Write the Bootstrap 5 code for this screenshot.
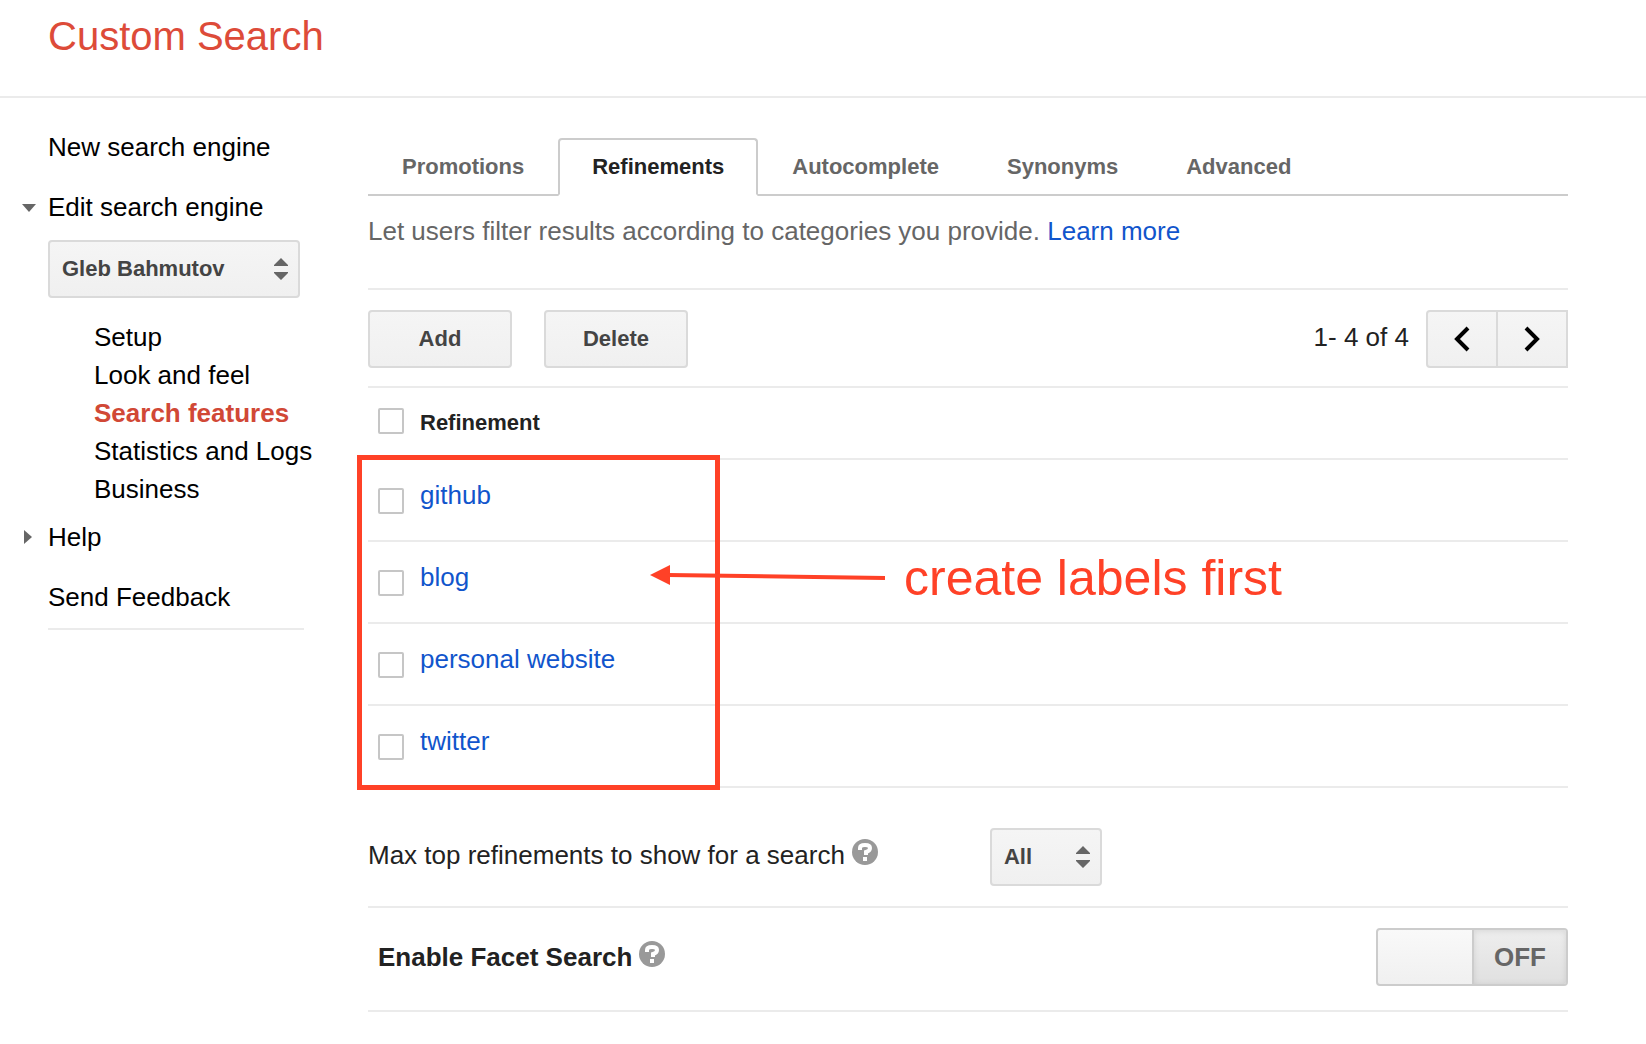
<!DOCTYPE html>
<html lang="en">
<head>
<meta charset="utf-8">
<meta name="viewport" content="width=device-width, initial-scale=1">
<title>Custom Search</title>
<link href="https://cdn.jsdelivr.net/npm/bootstrap@5.3.0/dist/css/bootstrap.min.css" rel="stylesheet">
<style>
  body { font-family: "Liberation Sans", Arial, sans-serif; font-size: 26px; line-height: 38px; color: #222; background: #fff; }
  a { color: #1155cc; text-decoration: none; }
  .top-bar { padding: 13px 48px 37px; border-bottom: 2px solid #ebebeb; }
  .brand-title { font-size: 40px; line-height: 46px; color: #dd4b39; font-weight: 400; }

  .side-col { width: 320px; padding: 30px 0 0 48px; margin-right: 48px; flex: none; }
  .side-col a { color: #000; display: block; white-space: nowrap; }
  .side-col .has-arrow { position: relative; }
  .side-arrow { position: absolute; right: 100%; top: 12px; width: 28px; height: 16px; }
  .side-main > li + li { margin-top: 22px; }
  .side-main > li.help-item { margin-top: 10px; }
  .side-sub { padding-left: 46px; margin-top: 20px; }
  .side-col .side-sub a.current { color: #d14836; font-weight: 700; }
  .side-rule { width: 256px; height: 2px; background: #ebebeb; margin-top: 12px; }

  .main-col { padding: 40px 78px 32px 0; min-width: 0; }
  .nav-tabs.feature-tabs { border-bottom: 2px solid #ccc; }
  .feature-tabs .nav-link { font-size: 22px; line-height: 24px; font-weight: 700; color: #666; border: 2px solid transparent; padding: 15px 32px; margin-bottom: -2px; border-radius: 4px 4px 0 0; }
  .feature-tabs .nav-link.active { color: #222; border-color: #ccc #ccc #fff; background: #fff; }
  .intro-text { color: #666; padding: 16px 0 38px; border-bottom: 2px solid #ebebeb; }
  .tool-row { padding: 20px 0 18px; border-bottom: 2px solid #ebebeb; }
  .page-count { margin-right: 17px; }
  .raised-text { padding-bottom: 4px; }

  .g-btn { font-size: 22px; line-height: 24px; font-weight: 700; color: #444; height: 58px; border: 2px solid #dadada; border-radius: 4px; background: linear-gradient(#f5f5f5, #f0f0f0); padding: 0; }
  .g-btn.wide-btn { width: 144px; }
  .g-btn.page-btn { width: 72px; }
  .page-group .g-btn.page-btn:not(:first-child) { border-radius: 0; margin-left: -2px; }
  .pick-wrap { position: relative; }
  .pick-wrap select { appearance: none; width: 100%; padding: 0 12px; }
  .pick-wrap svg { position: absolute; right: 12px; top: 18px; pointer-events: none; }
  .engine-pick { width: 252px; margin-top: 14px; }
  .max-pick { width: 112px; margin-left: 112px; }

  .list-wrap { position: relative; }
  .refine-table { width: 100%; }
  .refine-table tr { border-bottom: 2px solid #ebebeb; }
  .refine-table th, .refine-table td { vertical-align: top; padding: 16px 0 26px; }
  .refine-table th { font-size: 22px; line-height: 24px; padding: 23px 0; }
  .refine-table .tick-cell { width: 52px; padding: 28px 0 0 10px; line-height: 0; }
  .refine-table th.tick-cell { padding-top: 20px; }
  .g-tick { appearance: none; width: 26px; height: 26px; margin: 0; border: 2px solid #c6c6c6; border-radius: 2px; background: #fff; }

  .note-box { position: absolute; left: -11px; top: 67px; width: 363px; height: 335px; border: 5px solid #ff4127; pointer-events: none; }
  .note-callout { position: absolute; left: 282px; top: 158px; color: #ff4127; font-size: 50px; line-height: 60px; gap: 18px; pointer-events: none; white-space: nowrap; font-family: "Liberation Sans", Helvetica, sans-serif; }
  .note-callout span { padding-top: 2px; }
  .note-callout svg { margin-bottom: 2px; }

  .opt-row { padding: 20px 0; border-bottom: 2px solid #ebebeb; }
  .opt-row.max-row { padding-top: 40px; }
  .opt-row.facet-row { padding: 20px 0 24px 10px; font-weight: 700; }
  .help-dot { display: block; margin: 0 0 6px 7px; }
  .g-switch { display: flex; width: 192px; height: 58px; border: 2px solid #ccc; border-radius: 4px; padding: 0; background: linear-gradient(#f9f9f9, #f0f0f0); overflow: hidden; }
  .g-switch .off-half { width: 94px; margin-left: auto; border-left: 2px solid #ccc; color: #666; font-weight: 700; line-height: 54px; background: linear-gradient(#eee, #e0e0e0); box-shadow: inset 0 1px 6px rgba(0,0,0,.1); }
</style>
</head>
<body>
<header class="top-bar">
  <h1 class="brand-title m-0">Custom Search</h1>
</header>

<div class="d-flex">
  <nav class="side-col" aria-label="Search engine">
    <ul class="side-main list-unstyled m-0">
      <li><a href="#">New search engine</a></li>
      <li>
        <a class="has-arrow" href="#"><svg class="side-arrow" viewBox="0 0 28 16" aria-hidden="true"><path d="M2 4h14l-7 8z" fill="#666"/></svg>Edit search engine</a>
        <div class="pick-wrap engine-pick">
          <select class="g-btn" aria-label="Search engine"><option>Gleb Bahmutov</option></select>
          <svg width="14" height="22" viewBox="0 0 14 22" aria-hidden="true"><path d="M7 0l7 7v1H0V7zM0 14h14v1l-7 7-7-7z" fill="#666"/></svg>
        </div>
        <ul class="side-sub list-unstyled">
          <li><a href="#">Setup</a></li>
          <li><a href="#">Look and feel</a></li>
          <li><a class="current" href="#" aria-current="page">Search features</a></li>
          <li><a href="#">Statistics and Logs</a></li>
          <li><a href="#">Business</a></li>
        </ul>
      </li>
      <li class="help-item"><a class="has-arrow" href="#"><svg class="side-arrow" viewBox="0 0 28 16" aria-hidden="true"><path d="M4 0l8 7-8 7z" fill="#666"/></svg>Help</a></li>
      <li><a href="#">Send Feedback</a></li>
    </ul>
    <div class="side-rule"></div>
  </nav>

  <main class="main-col flex-grow-1">
    <ul class="nav nav-tabs feature-tabs">
      <li class="nav-item"><a class="nav-link" href="#">Promotions</a></li>
      <li class="nav-item"><a class="nav-link active" aria-current="page" href="#">Refinements</a></li>
      <li class="nav-item"><a class="nav-link" href="#">Autocomplete</a></li>
      <li class="nav-item"><a class="nav-link" href="#">Synonyms</a></li>
      <li class="nav-item"><a class="nav-link" href="#">Advanced</a></li>
    </ul>
    <p class="intro-text m-0">Let users filter results according to categories you provide. <a href="#">Learn more</a></p>

    <div class="tool-row d-flex align-items-center">
      <button type="button" class="btn g-btn wide-btn me-2">Add</button>
      <button type="button" class="btn g-btn wide-btn ms-4">Delete</button>
      <span class="page-count raised-text ms-auto">1- 4 of 4</span>
      <div class="btn-group page-group">
        <button type="button" class="btn g-btn page-btn" aria-label="Previous"><svg width="18" height="28" viewBox="0 0 18 28" aria-hidden="true"><path d="M15 3L4 14l11 11" fill="none" stroke="#000" stroke-width="4"/></svg></button>
        <button type="button" class="btn g-btn page-btn" aria-label="Next"><svg width="18" height="28" viewBox="0 0 18 28" aria-hidden="true"><path d="M3 3l11 11L3 25" fill="none" stroke="#000" stroke-width="4"/></svg></button>
      </div>
    </div>

    <div class="list-wrap">
      <table class="refine-table">
        <thead>
          <tr><th class="tick-cell"><input class="g-tick" type="checkbox" aria-label="Select all"></th><th scope="col">Refinement</th></tr>
        </thead>
        <tbody>
          <tr><td class="tick-cell"><input class="g-tick" type="checkbox" aria-label="github"></td><td><a href="#">github</a></td></tr>
          <tr><td class="tick-cell"><input class="g-tick" type="checkbox" aria-label="blog"></td><td><a href="#">blog</a></td></tr>
          <tr><td class="tick-cell"><input class="g-tick" type="checkbox" aria-label="personal website"></td><td><a href="#">personal website</a></td></tr>
          <tr><td class="tick-cell"><input class="g-tick" type="checkbox" aria-label="twitter"></td><td><a href="#">twitter</a></td></tr>
        </tbody>
      </table>
      <div class="note-box"></div>
      <div class="note-callout d-flex align-items-center">
        <svg width="236" height="24" viewBox="0 0 236 24" aria-hidden="true"><path d="M0 11L20 1v20z" fill="#ff4127"/><path d="M18 11l217 3" stroke="#ff4127" stroke-width="4"/></svg>
        <span>create labels first</span>
      </div>
    </div>

    <div class="opt-row max-row d-flex align-items-center">
      <div class="raised-text d-flex align-items-center">
        <label for="maxTop">Max top refinements to show for a search</label>
        <svg class="help-dot" width="26" height="26" viewBox="0 0 26 26" role="img" aria-label="Help"><circle cx="13" cy="13" r="13" fill="#999"/><path d="M8 11V9q0-3 5-3t5 3q0 3-4 4v3M13 18v4" fill="none" stroke="#fff" stroke-width="4"/></svg>
      </div>
      <div class="pick-wrap max-pick">
        <select id="maxTop" class="g-btn"><option>All</option></select>
        <svg width="14" height="22" viewBox="0 0 14 22" aria-hidden="true"><path d="M7 0l7 7v1H0V7zM0 14h14v1l-7 7-7-7z" fill="#666"/></svg>
      </div>
    </div>

    <div class="opt-row facet-row d-flex align-items-center">
      <span id="facetLabel">Enable Facet Search</span>
      <svg class="help-dot" width="26" height="26" viewBox="0 0 26 26" role="img" aria-label="Help"><circle cx="13" cy="13" r="13" fill="#999"/><path d="M8 11V9q0-3 5-3t5 3q0 3-4 4v3M13 18v4" fill="none" stroke="#fff" stroke-width="4"/></svg>
      <button type="button" class="g-switch ms-auto" role="switch" aria-checked="false" aria-labelledby="facetLabel"><span class="off-half">OFF</span></button>
    </div>
  </main>
</div>
<script src="https://cdn.jsdelivr.net/npm/bootstrap@5.3.0/dist/js/bootstrap.bundle.min.js"></script>
</body>
</html>
